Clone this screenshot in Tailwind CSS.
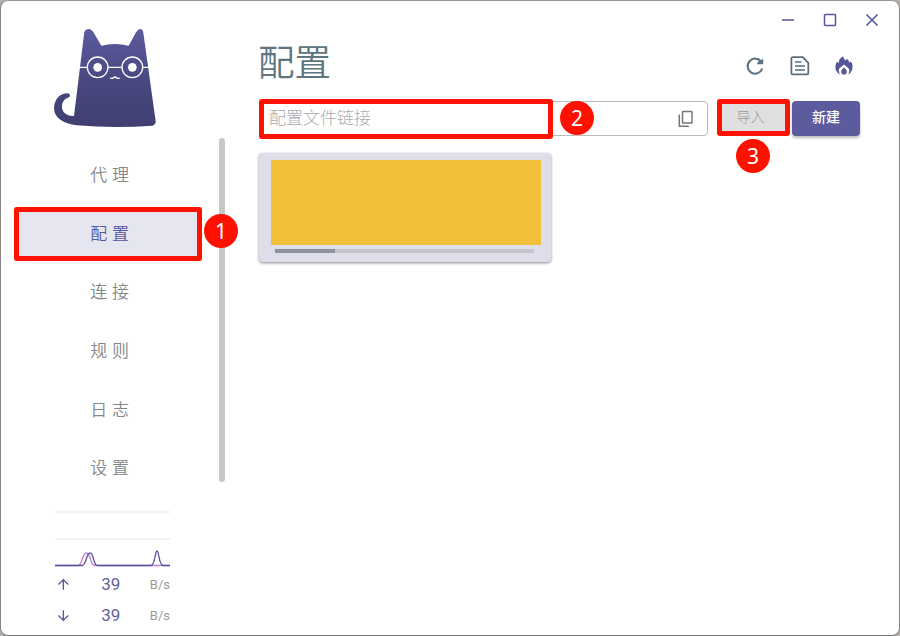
<!DOCTYPE html>
<html lang="zh-CN">
<head>
<meta charset="utf-8">
<title>配置</title>
<script src="https://cdn.jsdelivr.net/npm/@tailwindcss/browser@4"></script>
</head>
<body class="h-[636px] w-[900px] overflow-hidden bg-[#b5b0ae] font-['Roboto','Noto_Sans_CJK_SC',sans-serif]">
<div class="flex h-[636px] w-[900px] overflow-hidden rounded-lg border border-t-[#999] border-r-[#858585] border-b-[#777] border-l-[#858585] bg-white">

  <aside class="flex w-[258px] shrink-0 flex-col">
    <svg class="mt-[14px] ml-[39px] h-[120px] w-[130px] shrink-0" viewBox="0 0 390 360">
      <defs><linearGradient id="fur" x1="0" y1="0" x2="0" y2="1"><stop offset="0" stop-color="#5b5b9f"/><stop offset=".55" stop-color="#484880"/><stop offset="1" stop-color="#403f70"/></linearGradient></defs>
      <path fill="url(#fur)" d="M133 50Q138 40 148 42Q154 44 160 51L184 92Q225 82 266 92L288 52Q295 41 303 42Q309 44 310 53L347 319Q348 328 338 332Q220 340 110 331C70 326 42 309 42 280C43 250 63 235 81 235Q91 236 90 243Q88 248 80 250C60 260 61 292 83 300Q92 304 102 303Z"/>
      <g fill="none" stroke="#fff" stroke-width="4"><circle cx="173" cy="157" r="31"/><circle cx="277" cy="157" r="31"/><path d="M119 157H142M204 157H246M308 157H326M210 189Q218 192 225 185Q232 192 240 189"/></g>
      <circle cx="173" cy="157" r="13" fill="#fff"/><circle cx="277" cy="157" r="13" fill="#fff"/>
    </svg>

    <div class="mt-[3px] flex h-[345px] shrink-0">
      <nav class="ml-[13px] flex w-[188px] flex-col gap-[4.7px] pt-[10px] text-[17px] tracking-[4.8px] font-[350] text-[#83888b]">
        <a class="flex h-[54px] shrink-0 items-center justify-center pt-[2px] pl-[8px]">代理</a>
        <a class="relative flex h-[54px] shrink-0 items-center justify-center bg-[#e6e6f1] pt-[2px] pl-[8px] text-[#56569a]">配置<span class="absolute inset-0 rounded-[3px] border-5 border-[#ff1100]"></span></a>
        <a class="flex h-[54px] shrink-0 items-center justify-center pt-[1px] pl-[8px]">连接</a>
        <a class="flex h-[54px] shrink-0 items-center justify-center pt-[2px] pl-[8px]">规则</a>
        <a class="flex h-[54px] shrink-0 items-center justify-center pt-[2px] pl-[8px]">日志</a>
        <a class="flex h-[54px] shrink-0 items-center justify-center pt-[1px] pl-[8px]">设置</a>
      </nav>
      <div class="relative ml-[17px] h-[344px] w-[6px] rounded-full bg-[#c6c8c8]">
        <span class="absolute top-[76px] left-[-15px] flex size-[34px] items-center justify-center rounded-full bg-[#ff1100] pt-[2px] font-['Noto_Sans'] text-[21px] font-normal text-white">1</span>
      </div>
    </div>

    <div class="mt-[28px] ml-[54px] flex w-[115px] flex-col">
      <div class="h-[29px] border-y-2 border-[#f0f0f0]"></div>
      <svg class="mt-[8px] h-[20px] w-[115px]" viewBox="0 0 115 20" fill="none" stroke-width="1.3">
        <path stroke="#c77dc8" d="M0 17.5H23C27.5 17.5 27 5 31.5 5S35 17.5 39.5 17.5H115"/>
        <path stroke="#56569a" d="M0 17.5H27C31.5 17.5 31 5 35 5S38 17.5 42.5 17.5H96C100 17.5 100 3 102 3S104 17.5 108 17.5H115"/>
      </svg>
      <div class="mt-px flex h-[31px] items-center">
        <svg class="ml-[2px] size-[13px]" viewBox="0 0 13 13" fill="none" stroke="#56569a" stroke-width="1.4"><path d="M6.5 12V1.5M1.5 6.5L6.5 1.5L11.5 6.5"/></svg>
        <span class="ml-px w-[82px] text-center text-[17px] text-[#62629c]">39</span>
        <span class="-ml-[1px] text-[13px] text-[#999]">B/s</span>
      </div>
      <div class="flex h-[31px] items-center">
        <svg class="ml-[2px] size-[13px]" viewBox="0 0 13 13" fill="none" stroke="#56569a" stroke-width="1.4"><path d="M6.5 1V11.5M1.5 6.5L6.5 11.5L11.5 6.5"/></svg>
        <span class="ml-px w-[82px] text-center text-[17px] text-[#62629c]">39</span>
        <span class="-ml-[1px] text-[13px] text-[#999]">B/s</span>
      </div>
    </div>
  </aside>

  <main class="flex w-[640px] flex-col">
    <div class="flex h-[38px] items-center justify-end gap-[28px] pr-[20.5px] text-[#56569a]">
      <svg class="size-[14px]" viewBox="0 0 14 14" stroke="currentColor" stroke-width="1.6"><path d="M1 7H13"/></svg>
      <svg class="size-[14px]" viewBox="0 0 14 14" fill="none" stroke="currentColor" stroke-width="1.5"><rect x="1.5" y="1.5" width="11" height="11" rx=".7"/></svg>
      <svg class="size-[14px]" viewBox="0 0 14 14" stroke="currentColor" stroke-width="1.6"><path d="M1.5 1.5L12.5 12.5M12.5 1.5L1.5 12.5"/></svg>
    </div>
    <header class="flex h-[62px] items-start justify-between pr-[45px]">
      <h1 class="-ml-px mt-[3px] text-[36.5px] leading-[44px] font-[350] text-[#5f7580]">配置</h1>
      <div class="mt-[17px] flex gap-[24px] text-[#5a6f7b]">
        <svg class="size-[20px] -translate-x-px" viewBox="0 0 20 20" fill="none"><path d="M16.4 5.9A7.5 7.5 0 1 0 17.3 12.5" stroke="currentColor" stroke-width="2"/><path d="M11.8 8.2H18.2V2.5L16.3 4.2L14.6 3.6Z" fill="currentColor"/></svg>
        <svg class="size-[20px]" viewBox="0 0 20 20" fill="none" stroke="currentColor" stroke-width="1.8"><path d="M2.2 1.2H12.7L18.3 6.8V17Q18.3 18.3 17 18.3H2.7Q1.4 18.3 1.4 17V2.2Q1.4 1.2 2.4 1.2Z"/><path d="M5 6H11.5M5 10H15M5 14H15" stroke-width="1.7"/></svg>
        <svg class="size-[20px]" viewBox="0 0 20 20" fill="#56569a"><path d="M9.3.2C5.8 2 4.4 4.4 4.8 7.2L3 5.8C1.9 7.3 1.4 9 1.4 11C1.4 14.5 3.2 17 6 18.5C4.6 16 4.4 14 5.2 12.6L10 8.6L14.8 12.6C15.6 14 15.6 16 14.2 18.5C17 17 18.6 14.3 18.6 10.5C18.6 8.5 18 6.8 16.8 5.4L15.2 6.6C15 4.8 14 3.6 12.6 3L11.4 4.4C10.3 3.3 9.5 2 9.3.2Z"/><path d="M10 11.6C8.4 13 7.2 14 7.2 15.8A2.8 2.8 0 0 0 12.8 15.8C12.8 14 11.6 13 10 11.6Z"/></svg>
      </div>
    </header>

    <div class="relative flex h-[35px] items-stretch">
      <div class="relative flex w-[449px] items-center justify-between rounded-[4px] border border-[#bcbcbc] pr-[12px] pl-[9px]">
        <span class="pt-px text-[17px] font-light text-[#aaaeb1]">配置文件链接</span>
        <svg class="size-[18px]" viewBox="0 0 18 18" fill="none" stroke="#777" stroke-width="1.5"><rect x="5.5" y="1.5" width="9.5" height="11.5" rx=".5"/><path d="M2.3 4.5V16.3H11.8"/></svg>
        <span class="absolute top-[-3px] left-[-1px] h-[40px] w-[294px] rounded-[3px] border-5 border-[#ff1100]"></span>
        <span class="absolute top-[-1px] left-[300px] flex size-[34px] items-center justify-center rounded-full bg-[#ff1100] pt-[2px] font-['Noto_Sans'] text-[21px] text-white">2</span>
      </div>
      <div class="relative -mt-[2px] ml-[9px] flex h-[37px] w-[73px] items-center justify-center rounded-[3px] border-5 border-[#ff1100] bg-[#e0e0e0] pr-[6px] text-[14px] font-light text-[#999]">导入
        <span class="absolute top-[35px] left-[14px] flex size-[34px] items-center justify-center rounded-full bg-[#ff1100] pt-[2px] font-['Noto_Sans'] text-[21px] font-normal text-white">3</span>
      </div>
      <button class="ml-[2px] w-[68px] rounded-[4px] bg-[#5b5b9e] pb-[2px] text-[14px] font-medium text-white shadow-[0_2px_3px_#0004]">新建</button>
    </div>

    <div class="mt-[17px] h-[109px] w-[292px] rounded-[4px] bg-[#dedeea] px-[12px] pt-[7px] shadow-[0_1px_3px_#0007]">
      <div class="-mr-[2px] h-[85px] w-[270px] bg-[#f1c038]"></div>
      <div class="mt-[4px] ml-[4px] h-[4px] w-[259px] bg-[#c5c5ce]"><div class="h-full w-[60px] bg-[#8f929c]"></div></div>
    </div>
  </main>
</div>
</body>
</html>
